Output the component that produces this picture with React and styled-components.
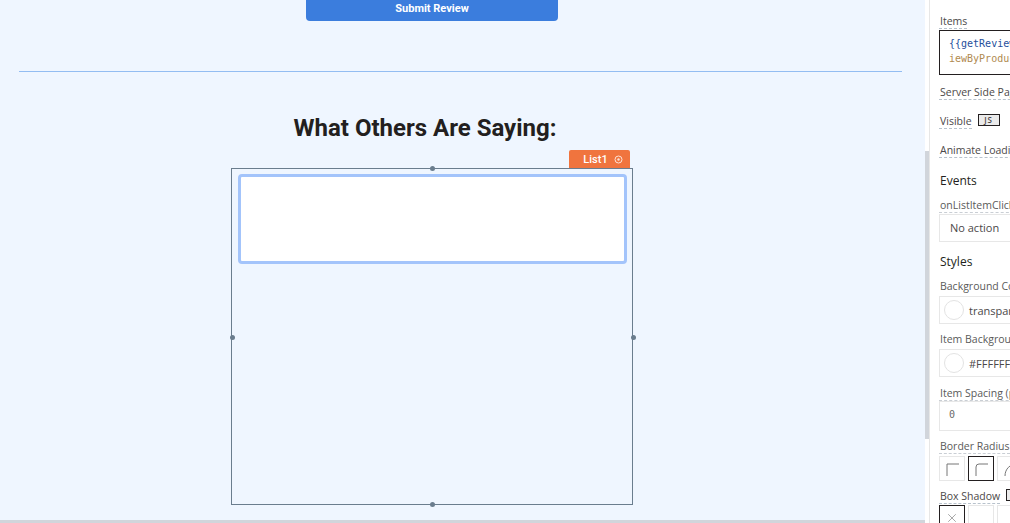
import React from "react";
import styled, { createGlobalStyle } from "styled-components";
import { X } from "lucide-react";

const GlobalStyle = createGlobalStyle`
  html, body {
    margin: 0;
    height: 100%;
    overflow: hidden;
    background: #eff6ff;
  }
  #root {
    height: 100%;
  }
`;

const Layout = styled.div`
  display: flex;
  width: 1010px;
  height: 523px;
  overflow: hidden;
`;

const Canvas = styled.div`
  width: 925px;
  height: 523px;
  flex-shrink: 0;
  display: flex;
  flex-direction: column;
  align-items: center;
  background: #eff6ff;
  border-bottom: 3px solid #d1d5db;
  box-sizing: border-box;
  padding-right: 61px;
  font-family: Roboto, sans-serif;
`;

const SubmitButton = styled.button`
  width: 252px;
  height: 21px;
  flex-shrink: 0;
  border: none;
  border-radius: 0 0 4px 4px;
  background: #3b7ddd;
  color: #fff;
  font-family: Roboto, sans-serif;
  font-size: 11px;
  font-weight: 700;
  padding: 0 0 5px;
`;

const Divider = styled.hr`
  align-self: flex-start;
  width: 883px;
  height: 1px;
  flex-shrink: 0;
  margin: 50px 0 0 19px;
  border: none;
  background: #93bdf2;
`;

const Heading = styled.h2`
  margin: 41px 0 0 -14px;
  height: 30px;
  line-height: 30px;
  font-size: 24px;
  font-weight: 700;
  color: #231f20;
`;

const ListFrame = styled.div`
  position: relative;
  width: 402px;
  height: 337px;
  flex-shrink: 0;
  margin-top: 25px;
  box-sizing: border-box;
  border: 1px solid #6a7d8e;
  padding: 5px 5px 5px 6px;
`;

const ListItem = styled.div`
  height: 90px;
  box-sizing: border-box;
  background: #fff;
  border: 3px solid #a3c4fb;
  border-radius: 4px;
`;

const NameTag = styled.div`
  position: absolute;
  right: 2px;
  top: -19px;
  width: 61px;
  height: 18px;
  box-sizing: border-box;
  padding-left: 7px;
  display: flex;
  align-items: center;
  justify-content: center;
  gap: 6px;
  background: #f0743e;
  border-radius: 2px 2px 0 0;
  color: #fff;
  font-size: 11px;
  font-weight: 500;
`;

const Handle = styled.span`
  position: absolute;
  width: 5px;
  height: 5px;
  border-radius: 50%;
  background: #6a7d8e;
  ${(p) => p.$side === "top" && "top: -3px; left: 198px;"}
  ${(p) => p.$side === "bottom" && "bottom: -3px; left: 198px;"}
  ${(p) => p.$side === "left" && "left: -2px; top: 166px;"}
  ${(p) => p.$side === "right" && "right: -4px; top: 166px;"}
`;

const ScrollTrack = styled.div`
  width: 5px;
  height: 523px;
  flex-shrink: 0;
  padding-top: 151px;
  box-sizing: border-box;
  background: #fff;
  border-right: 1px solid #e7e7e7;
`;

const ScrollThumb = styled.div`
  height: 288px;
  background: #d1d5db;
`;

const Panel = styled.aside`
  flex: 1;
  min-width: 0;
  height: 523px;
  overflow: hidden;
  background: #fff;
  box-sizing: border-box;
  padding: 0 0 0 9px;
  display: flex;
  flex-direction: column;
  align-items: flex-start;
  font-family: "Open Sans", sans-serif;
  font-size: 11px;
  color: #4b4848;
  white-space: nowrap;
`;

const Label = styled.div`
  height: 14px;
  line-height: 14px;
  margin-top: ${(p) => p.$top}px;
  padding-left: 1px;
  border-bottom: 1px dashed #b8c2cc;
  color: #4b4848;
  font-size: 10.5px;
  display: inline-block;
`;

const LabelRow = styled.div`
  display: flex;
  align-items: flex-start;
  gap: 6px;
  margin-top: ${(p) => p.$top}px;
  height: 15px;
`;

const InlineLabel = styled(Label)`
  margin-top: 0;
`;

const JsToggle = styled.span`
  width: 22px;
  height: 12px;
  flex-shrink: 0;
  box-sizing: border-box;
  border: 1px solid #231f20;
  background: #ebebeb;
  font-family: "Open Sans", sans-serif;
  font-size: 8px;
  font-weight: 600;
  letter-spacing: 1px;
  line-height: 10px;
  text-align: center;
  color: #4b4848;
`;

const CodeBox = styled.div`
  width: 100px;
  height: 45px;
  margin-top: 1px;
  flex-shrink: 0;
  box-sizing: border-box;
  border: 1px solid #231f20;
  padding: 5px 0 0 9px;
  font-family: "DejaVu Sans Mono", monospace;
  font-size: 10px;
  line-height: 15px;
  overflow: hidden;
`;

const CodeBlue = styled.div`
  color: #1f4f9c;
`;

const CodeBrown = styled.div`
  color: #b08a4f;
`;

const SectionTitle = styled.div`
  height: 16px;
  line-height: 16px;
  margin-top: ${(p) => p.$top}px;
  padding-left: 1px;
  font-size: 12px;
  color: #231f20;
`;

const PlainLabel = styled.div`
  height: 14px;
  line-height: 14px;
  margin-top: ${(p) => p.$top}px;
  padding-left: 1px;
  color: #5a5a5a;
  font-size: 10.5px;
  border-bottom: ${(p) => (p.$dashed ? "1px dashed #c9ced4" : "none")};
`;

const Field = styled.div`
  width: 100px;
  height: ${(p) => p.$height || 28}px;
  margin-top: ${(p) => p.$top}px;
  flex-shrink: 0;
  box-sizing: border-box;
  border: 1px solid #e7e7e7;
  display: flex;
  align-items: center;
  gap: 5px;
  padding-left: ${(p) => p.$pad || 4}px;
  padding-bottom: ${(p) => p.$lift || 0}px;
  color: #4b4848;
  overflow: hidden;
`;

const Swatch = styled.span`
  width: 20px;
  height: 20px;
  flex-shrink: 0;
  border-radius: 50%;
  border: 1px solid #e3e3e3;
  box-sizing: border-box;
`;

const Mono = styled.span`
  font-family: "DejaVu Sans Mono", monospace;
  font-size: 10px;
  color: #6a6a6a;
`;

const OptionRow = styled.div`
  display: flex;
  gap: 3px;
  margin-top: ${(p) => p.$top}px;
`;

const OptionBox = styled.div`
  width: 26px;
  height: 25px;
  flex-shrink: 0;
  box-sizing: border-box;
  border: 1px solid ${(p) => (p.$active ? "#231f20" : "#e7e7e7")};
  display: flex;
  align-items: center;
  justify-content: center;
  color: #6a6a6a;
`;

const CornerIcon = ({ d }) => (
  <svg width="16" height="16" viewBox="0 0 16 16" fill="none" stroke="#777" strokeWidth="1">
    <path d={d} />
  </svg>
);

export default function App() {
  return (
    <Layout>
      <GlobalStyle />
      <Canvas>
        <SubmitButton>Submit Review</SubmitButton>
        <Divider />
        <Heading>What Others Are Saying:</Heading>
        <ListFrame>
          <NameTag>
            List1
            <svg width="9" height="9" viewBox="0 0 9 9" fill="none" stroke="#fde2d6">
              <circle cx="4.5" cy="4.5" r="3.5" />
              <circle cx="4.5" cy="4.5" r="1.2" fill="#fde2d6" stroke="none" />
            </svg>
          </NameTag>
          <ListItem />
          <Handle $side="top" />
          <Handle $side="bottom" />
          <Handle $side="left" />
          <Handle $side="right" />
        </ListFrame>
      </Canvas>
      <ScrollTrack>
        <ScrollThumb />
      </ScrollTrack>
      <Panel>
        <Label $top={14}>Items</Label>
        <CodeBox>
          <CodeBlue>{"{{getReviewBy"}</CodeBlue>
          <CodeBrown>iewByProductId</CodeBrown>
        </CodeBox>
        <Label $top={10}>Server Side Pagination</Label>
        <LabelRow $top={14}>
          <InlineLabel>Visible</InlineLabel>
          <JsToggle>JS</JsToggle>
        </LabelRow>
        <Label $top={14}>Animate Loading</Label>
        <SectionTitle $top={15}>Events</SectionTitle>
        <PlainLabel $top={9} $dashed>onListItemClick</PlainLabel>
        <Field $pad={10} $top={1} $lift={2}>No action</Field>
        <SectionTitle $top={12}>Styles</SectionTitle>
        <PlainLabel $top={9}>Background Color</PlainLabel>
        <Field $top={3}><Swatch />transparent</Field>
        <PlainLabel $top={8}>Item Background</PlainLabel>
        <Field $top={3}><Swatch />#FFFFFF</Field>
        <PlainLabel $top={9} $dashed>Item Spacing (px)</PlainLabel>
        <Field $height={30} $pad={9} $top={0} $lift={3}><Mono>0</Mono></Field>
        <PlainLabel $top={8} $dashed>Border Radius</PlainLabel>
        <OptionRow $top={2}>
          <OptionBox><CornerIcon d="M3 15V3h12" /></OptionBox>
          <OptionBox $active><CornerIcon d="M3 15V6a3 3 0 0 1 3-3h9" /></OptionBox>
          <OptionBox><CornerIcon d="M3 15C3 8 8 3 15 3" /></OptionBox>
        </OptionRow>
        <LabelRow $top={8}>
          <InlineLabel>Box Shadow</InlineLabel>
          <JsToggle />
        </LabelRow>
        <OptionRow $top={1}>
          <OptionBox $active><X size={14} strokeWidth={1} /></OptionBox>
          <OptionBox />
          <OptionBox />
        </OptionRow>
      </Panel>
    </Layout>
  );
}
